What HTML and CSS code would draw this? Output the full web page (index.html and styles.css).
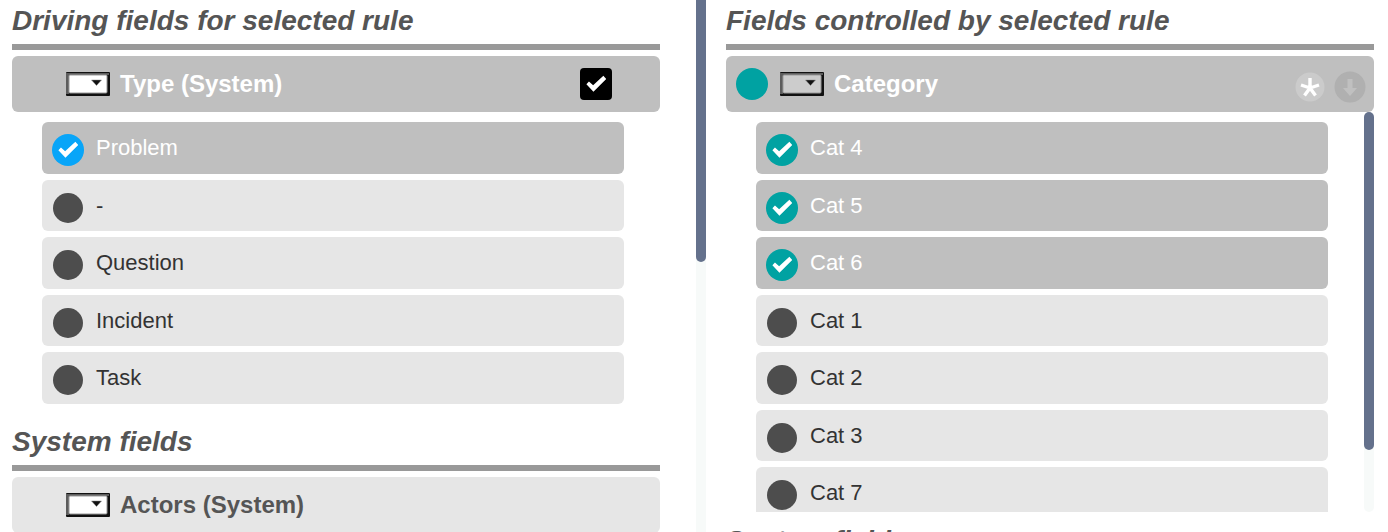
FILE: index.html
```
<!DOCTYPE html>
<html lang="en">

<head>
    <meta charset="UTF-8">
    <meta name="viewport" content="width=device-width, initial-scale=1.0" />
    <title>Field Rules</title>
    <link rel="stylesheet" href="styles.css">
</head>

<body>
    <!-- Drop-down field icon, shared by the field headers -->
    <svg class="symbols" aria-hidden="true">
        <symbol id="dropdown" viewBox="0 0 44 24">
            <rect width="44" height="24" rx="1" fill="#111" />
            <path d="M0 1h43v2H3v19H0z" fill="#5c5c5c" />
            <rect x="3" y="3" width="38" height="18" rx="1" stroke="#999" stroke-width="1" />
            <path d="M25.500 8h10l-5 5.500z" fill="#111" stroke="#888" stroke-width="0.500" />
        </symbol>
    </svg>

    <main>
        <!-- Driving fields -->
        <section class="column">
            <h2>Driving fields for selected rule</h2>
            <div class="field selected">
                <span class="marker"></span>
                <svg class="dropdown"><use href="#dropdown" /></svg>
                <h3>Type (System)</h3>
                <input type="checkbox" class="square" aria-label="Use Type (System)" checked />
            </div>
            <div class="options blue">
                <label><input type="checkbox" checked /><span>Problem</span></label>
                <label><input type="checkbox" /><span>-</span></label>
                <label><input type="checkbox" /><span>Question</span></label>
                <label><input type="checkbox" /><span>Incident</span></label>
                <label><input type="checkbox" /><span>Task</span></label>
            </div>

            <h2>System fields</h2>
            <div class="field">
                <span class="marker"></span>
                <svg class="dropdown"><use href="#dropdown" /></svg>
                <h3>Actors (System)</h3>
            </div>
        </section>

        <div class="track page-track">
            <div class="thumb"></div>
        </div>

        <!-- Controlled fields -->
        <section class="column">
            <h2>Fields controlled by selected rule</h2>
            <div class="field selected">
                <span class="marker active"></span>
                <svg class="dropdown muted"><use href="#dropdown" /></svg>
                <h3>Category</h3>
                <div class="actions">
                    <button type="button" aria-label="Required">
                        <svg viewBox="0 0 32 32">
                            <circle cx="16" cy="16" r="14.500" fill="#cbcbcb" />
                            <path d="M16 17V7M16 17l-9-3M16 17l9-3M16 17l-5.500 7.500M16 17l5.500 7.500" stroke="#fff" stroke-width="3.400" />
                        </svg>
                    </button>
                    <button type="button" aria-label="Move down">
                        <svg viewBox="0 0 32 32">
                            <circle cx="16" cy="16" r="15.500" fill="#b0b0b0" />
                            <path d="M13.500 8h5v9h4.500l-7 8-7-8h4.500z" fill="#c0c0c0" />
                        </svg>
                    </button>
                </div>
            </div>
            <div class="scroll-area">
                <div class="options teal">
                    <label><input type="checkbox" checked /><span>Cat 4</span></label>
                    <label><input type="checkbox" checked /><span>Cat 5</span></label>
                    <label><input type="checkbox" checked /><span>Cat 6</span></label>
                    <label><input type="checkbox" /><span>Cat 1</span></label>
                    <label><input type="checkbox" /><span>Cat 2</span></label>
                    <label><input type="checkbox" /><span>Cat 3</span></label>
                    <label><input type="checkbox" /><span>Cat 7</span></label>
                </div>
                <div class="track">
                    <div class="thumb"></div>
                </div>
            </div>

            <h2>System fields</h2>
        </section>
    </main>
</body>

</html>
```
FILE: styles.css
```
* {
    margin: 0;
    padding: 0;
    box-sizing: border-box;
}

body {
    font-family: "Liberation Sans", Arial, sans-serif;
    background-color: white;
    color: #333;
}

.symbols {
    position: absolute;
    width: 0;
    height: 0;
}

main {
    display: flex;
    height: 100vh;
    padding: 0 14px 0 12px;
    overflow: hidden;
}

.column {
    flex: 1;
    min-width: 0;
}

h2 {
    color: #555;
    font-size: 28px;
    font-style: italic;
    line-height: 42px;
    padding-bottom: 2px;
    border-bottom: 6px solid #999;
    margin-bottom: 6px;
    white-space: nowrap;
}

/* Field header */
.field {
    display: flex;
    align-items: center;
    height: 56px;
    padding: 0 8px 0 10px;
    border-radius: 6px;
    background-color: #e6e6e6;
    color: #555;
}

.field.selected {
    background-color: #bfbfbf;
    color: white;
}

.field h3 {
    flex: 1;
    font-size: 24px;
    line-height: 32px;
}

.marker {
    width: 32px;
    height: 32px;
    border-radius: 50%;
}

.marker.active {
    background-color: #00a2a2;
}

.dropdown {
    width: 44px;
    height: 24px;
    margin: 0 10px 0 12px;
    fill: white;
}

.dropdown.muted {
    fill: #ccc;
}

.actions {
    display: flex;
    gap: 8px;
    padding-top: 6px;
}

.actions button {
    width: 32px;
    height: 32px;
    border: none;
    background: none;
    cursor: pointer;
}

.actions svg {
    display: block;
}

/* Options */
.options {
    flex: 1;
    display: grid;
    grid-auto-rows: 52px 51px;
    gap: 6px;
    padding: 10px 36px 0 30px;
    margin-bottom: 17px;
}

.options label {
    display: flex;
    gap: 12px;
    padding: 0 10px;
    border-radius: 6px;
    background-color: #e6e6e6;
    font-size: 22px;
    line-height: 51px;
    cursor: pointer;
}

.options label:has(:checked) {
    background-color: #bfbfbf;
    color: white;
}

input[type="checkbox"] {
    appearance: none;
    width: 32px;
    height: 32px;
    border: 1px solid transparent;
    border-radius: 50%;
    background: #4d4d4d padding-box;
    cursor: pointer;
}

.options input {
    margin-top: 12px;
}

input[type="checkbox"]:checked {
    border: none;
}

input[type="checkbox"]:checked::before {
    content: "";
    display: block;
    height: 100%;
    background-color: white;
    clip-path: polygon(20% 51%, 28% 42%, 41% 54%, 73% 24%, 82% 34%, 42% 74%);
}

.blue input:checked {
    background-color: #08a5f8;
}

.teal input:checked {
    background-color: #00a2a2;
}

input[type="checkbox"].square {
    margin-right: 40px;
    border-radius: 4px;
    background-color: black;
}

/* Scrolling */
.scroll-area {
    display: flex;
    height: 400px;
    margin-bottom: 8px;
    overflow: hidden;
}

.track {
    width: 10px;
    border-radius: 5px;
    background-color: #f7faf9;
}

.thumb {
    height: 338px;
    border-radius: 5px;
    background-color: #64718c;
}

.page-track {
    margin: 0 20px 0 36px;
    border-radius: 0;
}

.page-track .thumb {
    height: 262px;
    border-radius: 0 0 5px 5px;
}
```
